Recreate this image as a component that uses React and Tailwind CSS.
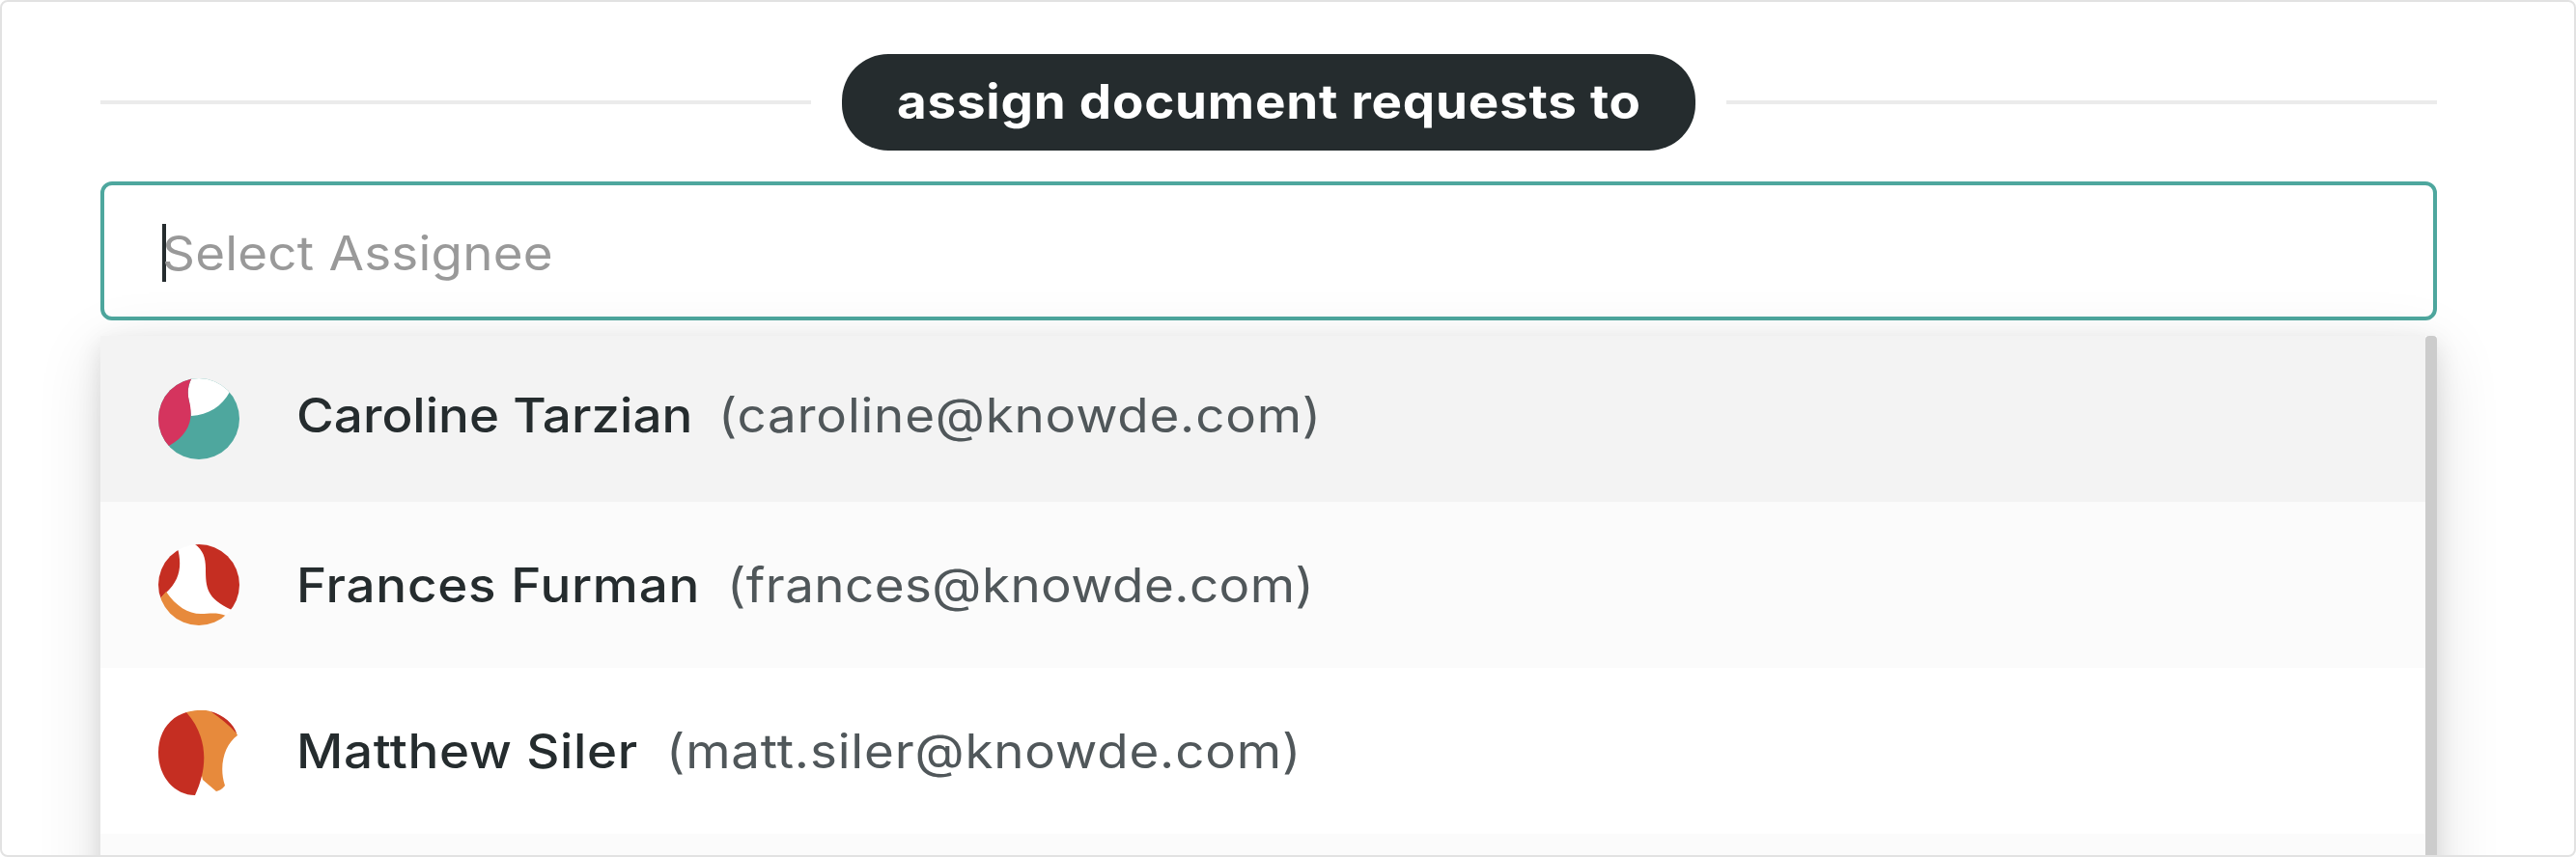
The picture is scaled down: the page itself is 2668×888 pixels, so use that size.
const people = [
  {
    name: 'Caroline Tarzian',
    email: '(caroline@knowde.com)',
    row: 'bg-[#f3f3f3]',
    textClass: 'pb-1.5',
    nameClass: 'w-[437px] tracking-[0.02px]',
    emailClass: 'tracking-[0.73px]',
    Avatar: CarolineAvatar,
  },
  {
    name: 'Frances Furman',
    email: '(frances@knowde.com)',
    row: 'bg-[#fbfbfb]',
    textClass: 'pt-0.5',
    nameClass: 'w-[446px] tracking-[0.7px]',
    emailClass: 'tracking-[0.41px]',
    Avatar: FrancesAvatar,
  },
  {
    name: 'Matthew Siler',
    email: '(matt.siler@knowde.com)',
    row: 'bg-white',
    textClass: 'pt-0.5',
    nameClass: 'w-[383px] tracking-[0.6px]',
    emailClass: 'tracking-[0.77px]',
    Avatar: MatthewAvatar,
  },
]

function CarolineAvatar() {
  return (
    <svg viewBox="0 0 84 84" className="w-[84px] h-[84px]">
      <clipPath id="caroline">
        <circle cx="42" cy="42" r="42" />
      </clipPath>
      <g clipPath="url(#caroline)">
        <rect width="84" height="84" fill="#4ea79e" />
        <path d="M35 -1C30 8 30 17 32 24L34 39C52 38 66 29 74 14V-1Z" fill="#fff" />
        <path d="M35 -1C30 8 30 16 32 24C37 43 31 59 11 70L-2 74V-1Z" fill="#d5345e" />
      </g>
    </svg>
  )
}

function FrancesAvatar() {
  return (
    <svg viewBox="0 0 84 84" className="w-[84px] h-[84px]">
      <clipPath id="frances">
        <circle cx="42" cy="42" r="42" />
      </clipPath>
      <g clipPath="url(#frances)">
        <rect width="84" height="84" fill="#fff" />
        <path d="M20 4C24 20 24 36 7 51L2 56L-2 50V0Z" fill="#c52e22" />
        <path d="M38 0C46 6 49 13 49 25C49 45 50 56 76 68L86 60V-1Z" fill="#c52e22" />
        <path d="M2 56L8 49C18 64 31 72 44 72C53 72 60 70 70 74L60 86H0Z" fill="#e78a3c" />
      </g>
    </svg>
  )
}

function MatthewAvatar() {
  return (
    <svg viewBox="0 0 84 88" className="w-[84px] h-[88px]">
      <path d="M29 2C42 -1 50 -1 56 2C68 6 78 15 82 26C69 35 62 57 69 78C66 82 63 83 60 84L46 72Z" fill="#e78a3c" />
      <path d="M54 1C68 5 78 14 81 24C73 15 64 8 54 1Z" fill="#c52e22" />
      <path d="M29 2C51 27 52 58 38 88C17 88 0 69 0 44C0 22 12 7 29 2Z" fill="#c52e22" />
    </svg>
  )
}

function Option({ person }) {
  const { name, email, row, textClass, nameClass, emailClass, Avatar } = person
  return (
    <li className={`flex h-[172px] shrink-0 items-center pl-[60px] whitespace-nowrap ${row}`}>
      <div className="flex h-[84px] w-[143px] shrink-0 items-start">
        <Avatar />
      </div>
      <div className={`flex ${textClass}`}>
        <span className={`shrink-0 origin-left scale-x-108 text-[#252c2e] ${nameClass}`}>{name}</span>
        <span className={`origin-left scale-x-108 font-normal text-[#50575a] ${emailClass}`}>{email}</span>
      </div>
    </li>
  )
}

export default function App() {
  return (
    <div
      className="flex h-[888px] w-[2668px] flex-col overflow-hidden rounded-lg border-2 border-[#e2e2e2] bg-white pt-[54px] pr-[142px] pl-[102px] text-[49px] leading-[60px] font-medium"
      style={{ fontFamily: 'Inter, "Liberation Sans", sans-serif' }}
    >
      {/* Section heading */}
      <div className="flex h-[100px] shrink-0 items-center gap-8">
        <div className="h-1 flex-1 bg-[#ebebeb]" />
        <div className="flex h-[100px] w-[884px] items-center rounded-[48px] bg-[#252c2e] pl-[57px] font-bold whitespace-nowrap text-white">
          <span className="origin-left scale-x-108 tracking-[0.73px]">assign document requests to</span>
        </div>
        <div className="h-1 flex-1 bg-[#ebebeb]" />
      </div>

      {/* Assignee input */}
      <div className="mt-8 flex h-36 shrink-0 items-center rounded-xl border-4 border-[#4ea79e] bg-white pt-1 pl-[60px]">
        <div className="h-[60px] w-1 bg-[#252c2e]" />
        <span className="-ml-1 origin-left scale-x-108 pt-0.5 font-normal tracking-[0.2px] text-[#999999]">
          Select Assignee
        </span>
      </div>

      {/* Options */}
      <div className="mt-4 flex h-[640px] shrink-0 bg-white shadow-[0_16px_64px_rgba(0,0,0,0.12),0_8px_24px_rgba(0,0,0,0.1)]">
        <ul className="flex flex-1 flex-col overflow-hidden">
          {people.map((person) => (
            <Option key={person.name} person={person} />
          ))}
          <li className="h-[172px] shrink-0 bg-[#fbfbfb]" />
        </ul>
        <div className="w-3 rounded-t bg-[#cccccc]" />
      </div>
    </div>
  )
}
